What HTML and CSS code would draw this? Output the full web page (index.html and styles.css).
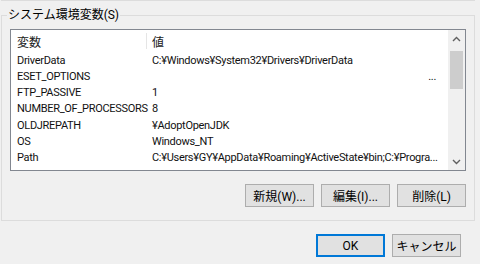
FILE: index.html
```html
<!DOCTYPE html>
<html lang="ja">
<head>
<meta charset="utf-8">
<link rel="stylesheet" href="styles.css">
</head>
<body>
<div class="prev-group"></div>
<div class="group">
  <div class="group-label">システム環境変数(S)</div>
  <div class="listbox">
    <div class="list-main">
      <div class="list-head">
        <div class="col-name">変数</div>
        <div class="col-sep"></div>
        <div class="col-value">値</div>
      </div>
      <div class="row"><div class="col-name">DriverData</div><div class="col-value">C:¥Windows¥System32¥Drivers¥DriverData</div></div>
      <div class="row"><div class="col-name">ESET_OPTIONS</div><div class="col-value right">...</div></div>
      <div class="row"><div class="col-name">FTP_PASSIVE</div><div class="col-value">1</div></div>
      <div class="row"><div class="col-name">NUMBER_OF_PROCESSORS</div><div class="col-value">8</div></div>
      <div class="row"><div class="col-name">OLDJREPATH</div><div class="col-value">¥AdoptOpenJDK</div></div>
      <div class="row"><div class="col-name">OS</div><div class="col-value">Windows_NT</div></div>
      <div class="row"><div class="col-name">Path</div><div class="col-value">C:¥Users¥GY¥AppData¥Roaming¥ActiveState¥bin;C:¥Progra...</div></div>
    </div>
    <div class="scrollbar">
      <div class="sb-btn"><svg width="9" height="6" viewBox="0 0 9 6"><path d="M1 5 L4.5 1.5 L8 5" fill="none" stroke="#606060" stroke-width="1.4"/></svg></div>
      <div class="sb-track"><div class="sb-thumb"></div></div>
      <div class="sb-btn"><svg width="9" height="6" viewBox="0 0 9 6"><path d="M1 1 L4.5 4.5 L8 1" fill="none" stroke="#606060" stroke-width="1.4"/></svg></div>
    </div>
  </div>
  <div class="btn-row">
    <button class="btn">新規(W)...</button>
    <button class="btn">編集(I)...</button>
    <button class="btn">削除(L)</button>
  </div>
</div>
<div class="dialog-buttons">
  <button class="btn default">OK</button>
  <button class="btn">キャンセル</button>
</div>
</body>
</html>
```

FILE: styles.css
```css
html, body {
  margin: 0;
  padding: 0;
}
body {
  width: 480px;
  height: 264px;
  overflow: hidden;
  background: #f0f0f0;
  font-family: "Roboto", "Noto Sans CJK JP", sans-serif;
  font-size: 12px;
  color: #000;
}
.prev-group {
  margin: -5px 5px 0 1px;
  height: 5px;
  border: 1px solid #dcdcdc;
  border-top: none;
}
.group {
  position: relative;
  margin: 14px 5px 0 1px;
  border: 1px solid #dcdcdc;
  padding: 13px 8px 0 8px;
  box-sizing: border-box;
  height: 206px;
}
.group-label {
  position: absolute;
  left: 5px;
  top: -9px;
  padding: 0 1px;
  background: #f0f0f0;
  line-height: 16px;
}
.listbox {
  display: flex;
  height: 142px;
  border: 1px solid #828790;
  box-sizing: border-box;
  background: #fff;
}
.list-main {
  flex: 1;
  min-width: 0;
  display: flex;
  flex-direction: column;
}
.list-head {
  display: flex;
  align-items: center;
  height: 22.5px;
  color: #1a1a1a;
}
.col-name {
  width: 129px;
  padding-left: 6px;
  flex: none;
  white-space: nowrap;
}
.col-sep {
  width: 1px;
  height: 16px;
  background: #e5e5e5;
  margin-right: 5px;
}
.col-value {
  flex: 1;
  min-width: 0;
  white-space: nowrap;
  overflow: hidden;
  padding-right: 8px;
}
.row {
  display: flex;
  height: 16.33px;
  line-height: 16.33px;
  font-size: 11px;
  letter-spacing: -0.3px;
  color: #111;
}
.row .col-value {
  padding-left: 6px;
}
.col-value.right {
  text-align: right;
  padding-right: 12px;
}
.scrollbar {
  width: 17px;
  flex: none;
  background: #f0f0f0;
  display: flex;
  flex-direction: column;
}
.sb-btn {
  height: 17px;
  display: flex;
  align-items: center;
  justify-content: center;
}
.sb-track {
  flex: 1;
  padding: 4px 2px 0 2px;
}
.sb-thumb {
  height: 38px;
  background: #cdcdcd;
}
.btn-row {
  display: flex;
  justify-content: flex-end;
  gap: 7px;
  margin-top: 13px;
}
.btn {
  width: 69px;
  height: 23px;
  padding: 0;
  box-sizing: border-box;
  background: #e1e1e1;
  border: 1px solid #adadad;
  border-radius: 0;
  font-family: "Roboto", "Noto Sans CJK JP", sans-serif;
  font-size: 12px;
  color: #000;
}
.btn.default {
  border: 2px solid #0078d7;
}
.dialog-buttons {
  display: flex;
  justify-content: flex-end;
  gap: 7px;
  margin: 13px 19px 0 0;
}
```
